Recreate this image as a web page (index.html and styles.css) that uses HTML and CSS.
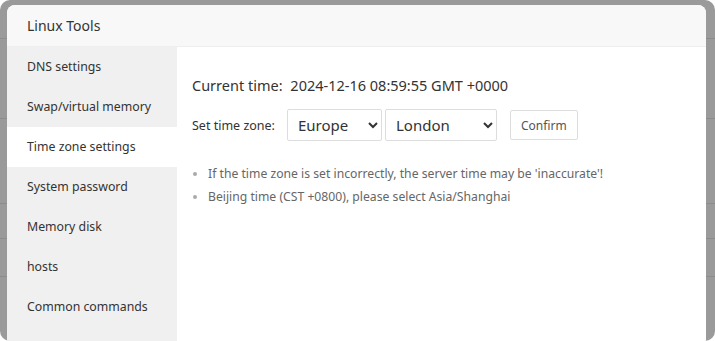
FILE: index.html
```html
<!DOCTYPE html>
<html lang="en">
<head>
    <meta charset="UTF-8">
    <meta name="viewport" content="width=device-width, initial-scale=1.0">
    <title>Linux Tools</title>
    <link rel="stylesheet" href="styles.css">
</head>
<body>
    <div class="backdrop">
        <div class="page-lines">
            <div class="page-line" style="top: 38px"></div>
            <div class="page-line" style="top: 118px"></div>
            <div class="page-line" style="top: 203px"></div>
            <div class="page-line" style="top: 238px"></div>
            <div class="page-line" style="top: 276px"></div>
        </div>

        <div class="dialog">
            <div class="dialog-title">Linux Tools</div>
            <div class="dialog-body">
                <ul class="tool-menu">
                    <li>DNS settings</li>
                    <li>Swap/virtual memory</li>
                    <li class="active">Time zone settings</li>
                    <li>System password</li>
                    <li>Memory disk</li>
                    <li>hosts</li>
                    <li>Common commands</li>
                </ul>

                <div class="tool-content">
                    <p class="current-time">
                        <span class="label">Current time:</span>
                        <span>2024-12-16 08:59:55 GMT +0000</span>
                    </p>

                    <div class="zone-row">
                        <span class="zone-label">Set time zone:</span>
                        <select class="zone-select region">
                            <option>Europe</option>
                            <option>Asia</option>
                            <option>America</option>
                        </select>
                        <select class="zone-select city">
                            <option>London</option>
                            <option>Paris</option>
                            <option>Berlin</option>
                        </select>
                        <button class="btn">Confirm</button>
                    </div>

                    <ul class="tips">
                        <li>If the time zone is set incorrectly, the server time may be 'inaccurate'!</li>
                        <li>Beijing time (CST +0800), please select Asia/Shanghai</li>
                    </ul>
                </div>
            </div>
        </div>
    </div>
</body>
</html>
```

FILE: styles.css
```css
* {
    margin: 0;
    padding: 0;
    box-sizing: border-box;
}

body {
    background-color: #fff;
    font-family: "Noto Sans", "Noto Sans CJK SC", sans-serif;
    color: #333;
    overflow: hidden;
}

/* Gray overlay behind the dialog */
.backdrop {
    position: relative;
    height: 341px;
    background-color: #9a9a9a;
    border-radius: 10px;
    overflow: hidden;
    padding: 5px 9px 0 7px;
}

.page-lines {
    position: absolute;
    inset: 0;
}

.page-line {
    position: absolute;
    left: 0;
    right: 0;
    height: 1px;
    background-color: #8c8c8c;
}

/* Dialog */
.dialog {
    position: relative;
    background-color: #fff;
    border-radius: 8px 8px 0 0;
    overflow: hidden;
    height: 400px;
}

.dialog-title {
    height: 42px;
    line-height: 41px;
    padding-left: 20px;
    font-size: 14px;
    background-color: #f8f8f8;
    border-bottom: 1px solid #eee;
}

.dialog-body {
    display: flex;
    height: 100%;
}

/* Left menu */
.tool-menu {
    list-style: none;
    width: 170px;
    background-color: #f0f0f0;
}

.tool-menu li {
    height: 40px;
    line-height: 39px;
    padding-left: 20px;
    font-size: 12.3px;
    cursor: pointer;
}

.tool-menu li.active {
    background-color: #fff;
}

/* Right content */
.tool-content {
    flex: 1;
    padding: 28px 15px;
}

.current-time {
    font-size: 14.5px;
    line-height: 20px;
}

.current-time .label {
    margin-right: 4px;
}

.zone-row {
    display: flex;
    align-items: center;
    margin-top: 14px;
}

.zone-label {
    font-size: 12.5px;
    width: 95px;
}

.zone-select {
    height: 32px;
    border: 1px solid #ddd;
    border-radius: 2px;
    padding: 0 6px;
    font-size: 15px;
    font-family: inherit;
    color: #333;
    background-color: #fff;
}

.zone-select.region {
    width: 95px;
}

.zone-select.city {
    width: 112px;
    margin-left: 3px;
}

.btn {
    height: 30px;
    margin-left: 13px;
    padding: 0 10px;
    border: 1px solid #ddd;
    border-radius: 2px;
    background-color: #fff;
    color: #555;
    font-size: 12px;
    font-family: inherit;
    cursor: pointer;
}

.tips {
    list-style: none;
    margin-top: 21px;
    font-size: 12.2px;
    color: #666;
}

.tips li {
    position: relative;
    line-height: 23px;
    padding-left: 16px;
}

.tips li::before {
    content: "";
    position: absolute;
    left: 1px;
    top: 10px;
    width: 4px;
    height: 4px;
    border-radius: 50%;
    background-color: #aaa;
}
```
